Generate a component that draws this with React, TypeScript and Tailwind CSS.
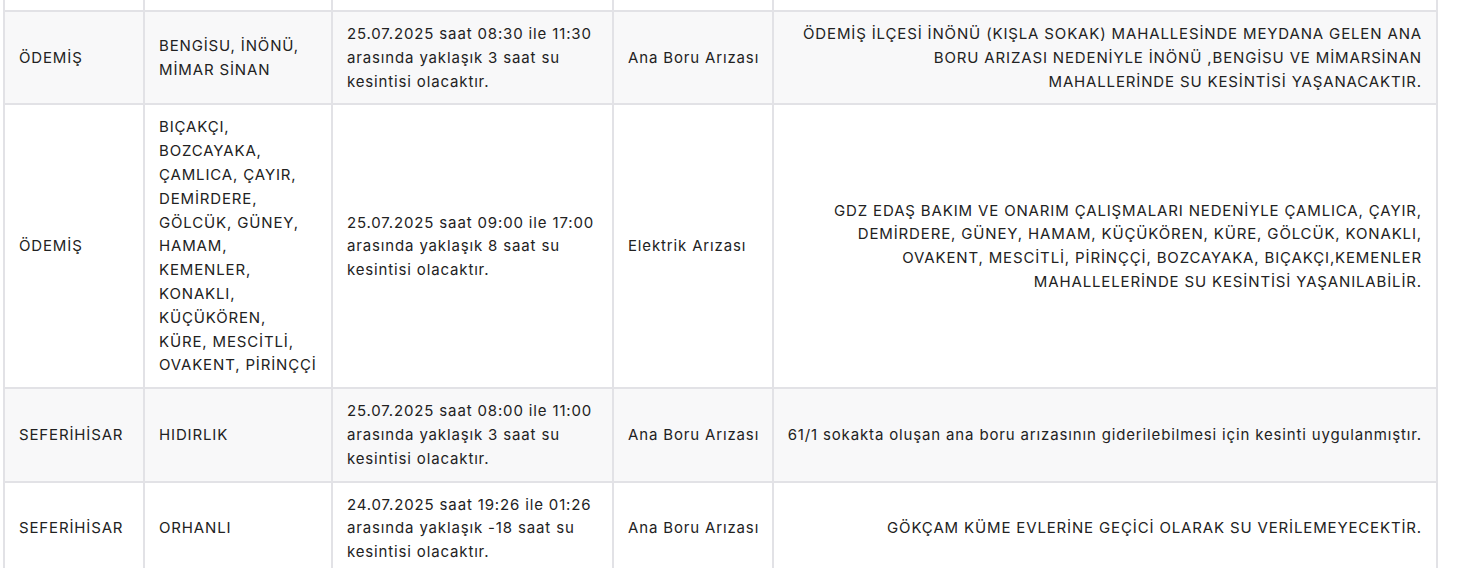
import React from 'react';

interface Outage {
  district: string;
  hoods: string;
  when: string;
  reason: string;
  note: string;
}

const rows: Outage[] = [
  {
    district: 'ÖDEMİŞ',
    hoods: 'BENGİSU, İNÖNÜ, MİMAR SİNAN',
    when: '25.07.2025 saat 08:30 ile 11:30 arasında yaklaşık 3 saat su kesintisi olacaktır.',
    reason: 'Ana Boru Arızası',
    note: 'ÖDEMİŞ İLÇESİ İNÖNÜ (KIŞLA SOKAK) MAHALLESİNDE MEYDANA GELEN ANA BORU ARIZASI NEDENİYLE İNÖNÜ ,BENGİSU VE MİMARSİNAN\nMAHALLERİNDE SU KESİNTİSİ YAŞANACAKTIR.',
  },
  {
    district: 'ÖDEMİŞ',
    hoods: 'BIÇAKÇI, BOZCAYAKA, ÇAMLICA, ÇAYIR, DEMİRDERE, GÖLCÜK, GÜNEY, HAMAM, KEMENLER, KONAKLI, KÜÇÜKÖREN, KÜRE, MESCİTLİ, OVAKENT, PİRİNÇÇİ',
    when: '25.07.2025 saat 09:00 ile 17:00 arasında yaklaşık 8 saat su kesintisi olacaktır.',
    reason: 'Elektrik Arızası',
    note: 'GDZ EDAŞ BAKIM VE ONARIM ÇALIŞMALARI NEDENİYLE ÇAMLICA, ÇAYIR, DEMİRDERE, GÜNEY, HAMAM, KÜÇÜKÖREN, KÜRE, GÖLCÜK, KONAKLI, OVAKENT, MESCİTLİ, PİRİNÇÇİ, BOZCAYAKA, BIÇAKÇI,KEMENLER MAHALLELERİNDE SU KESİNTİSİ YAŞANILABİLİR.',
  },
  {
    district: 'SEFERİHİSAR',
    hoods: 'HIDIRLIK',
    when: '25.07.2025 saat 08:00 ile 11:00 arasında yaklaşık 3 saat su kesintisi olacaktır.',
    reason: 'Ana Boru Arızası',
    note: '61/1 sokakta oluşan ana boru arızasının giderilebilmesi için kesinti uygulanmıştır.',
  },
  {
    district: 'SEFERİHİSAR',
    hoods: 'ORHANLI',
    when: '24.07.2025 saat 19:26 ile 01:26 arasında yaklaşık -18 saat su kesintisi olacaktır.',
    reason: 'Ana Boru Arızası',
    note: 'GÖKÇAM KÜME EVLERİNE GEÇİCİ OLARAK SU VERİLEMEYECEKTİR.',
  },
];

const cell = 'border-2 border-[#e2e2e6] py-[10px] align-middle';
const edge = 'border-2 border-t-0 border-[#e2e2e6]';

export default function App() {
  return (
    <div className="bg-white pl-[3px] font-['Inter',sans-serif] text-[15px] leading-[23.8px] tracking-[0.85px] text-[#222]">
      <table className="w-[1433px] table-fixed border-collapse">
        <colgroup>
          <col className="w-[140px]" />
          <col className="w-[188px]" />
          <col className="w-[281px]" />
          <col className="w-[160px]" />
          <col className="w-[664px]" />
        </colgroup>
        <tbody>
          {/* bottom of the previous row, scrolled out of view */}
          <tr className="h-[11px]">
            <td className={edge} />
            <td className={edge} />
            <td className={edge} />
            <td className={edge} />
            <td className={edge} />
          </tr>
          {rows.map((r, i) => (
            <tr key={i} className={i % 2 === 0 ? 'bg-[#f8f8f9]' : 'bg-white'}>
              <td className={`${cell} px-[14px]`}>{r.district}</td>
              <td className={`${cell} px-[14px]`}>{r.hoods}</td>
              <td className={`${cell} px-[14px]`}>{r.when}</td>
              <td className={`${cell} pl-[14px] pr-[6px]`}>{r.reason}</td>
              <td className={`${cell} pl-[6px] pr-[14px] text-right whitespace-pre-line`}>{r.note}</td>
            </tr>
          ))}
        </tbody>
      </table>
    </div>
  );
}
